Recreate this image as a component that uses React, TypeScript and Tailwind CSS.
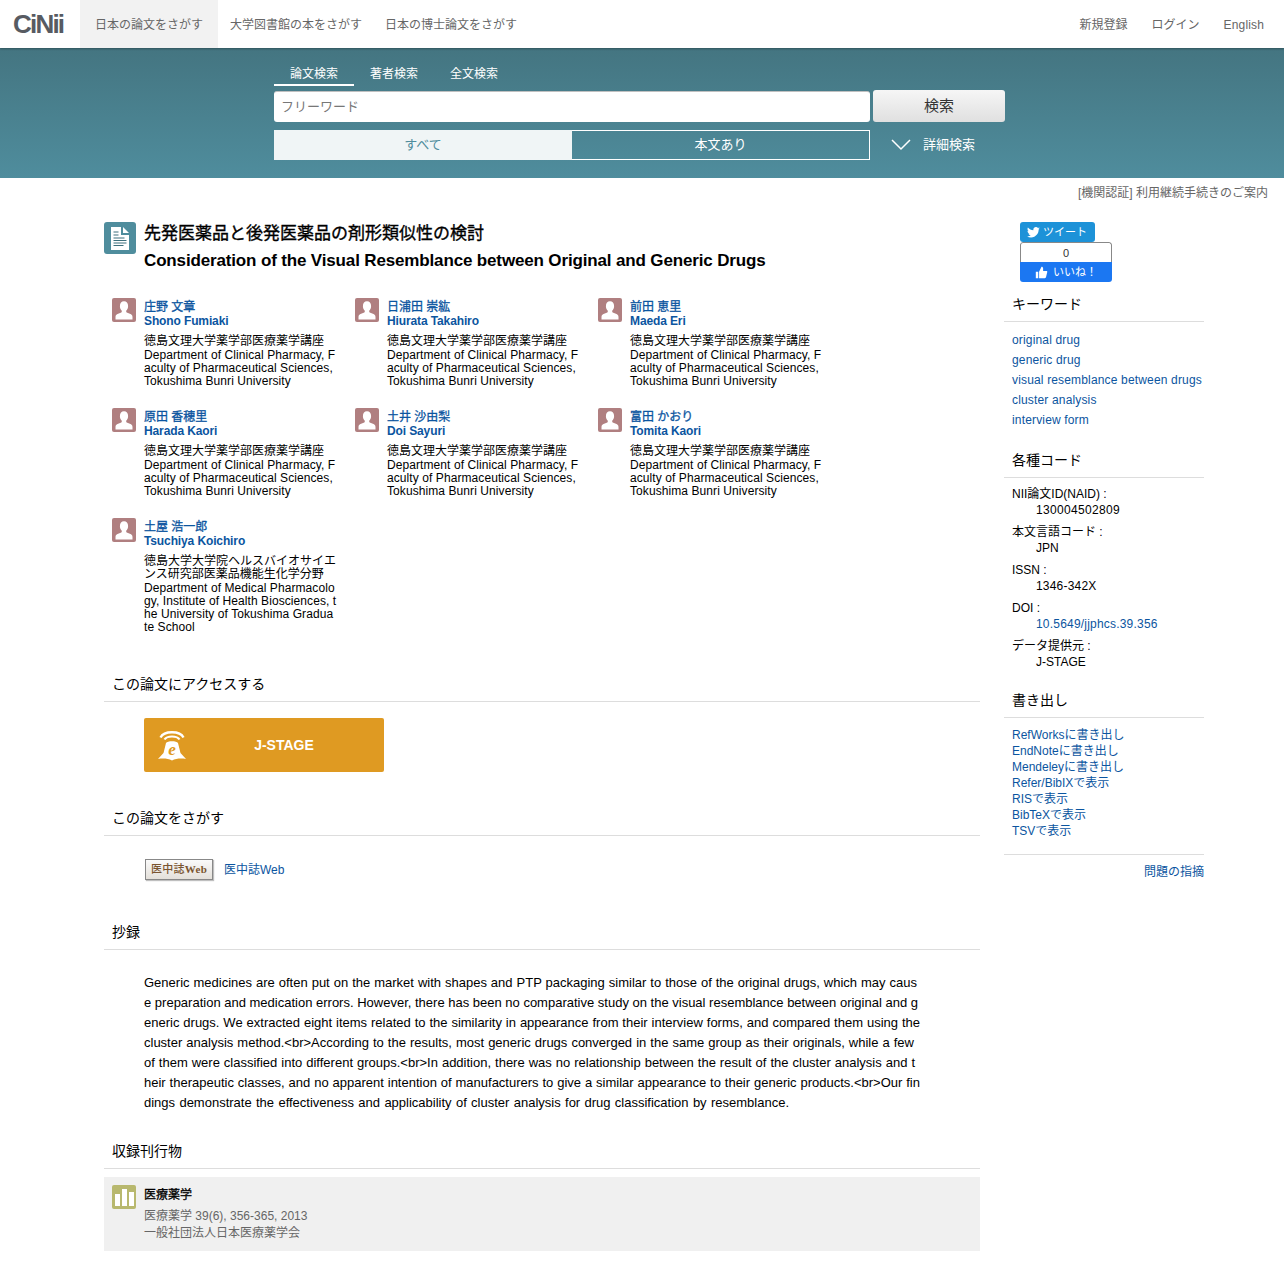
import React from "react";

const font = { fontFamily: '"Liberation Sans", "Noto Sans CJK JP", sans-serif' };

const Person = () => (
  <svg width="24" height="24" viewBox="0 0 24 24" className="block rounded-[2px] bg-[#b07f80] shrink-0">
    <path d="M3.5 21.5v-2.6c0-1.6 1-2.5 2.6-3.1l3.2-1.3c.4-.2.5-.5.5-.9v-.9c-1.2-1-1.9-2.600-1.900-4.700C7.900 5 9.500 3.200 12 3.200s4.100 1.800 4.100 4.800c0 2.100-.7 3.700-1.900 4.700v.9c0 .4.100.7.500.9l3.200 1.300c1.600.6 2.600 1.500 2.600 3.100v2.600z" fill="#fff" />
  </svg>
);

const stdAff = "徳島文理大学薬学部医療薬学講座";
const stdEn = ["Department of Clinical Pharmacy, F", "aculty of Pharmaceutical Sciences,", "Tokushima Bunri University"];
const authors = [
  { ja: "庄野 文章", en: "Shono Fumiaki", aff: stdAff, enAff: stdEn },
  { ja: "日浦田 崇紘", en: "Hiurata Takahiro", aff: stdAff, enAff: stdEn },
  { ja: "前田 恵里", en: "Maeda Eri", aff: stdAff, enAff: stdEn },
  { ja: "原田 香穂里", en: "Harada Kaori", aff: stdAff, enAff: stdEn },
  { ja: "土井 沙由梨", en: "Doi Sayuri", aff: stdAff, enAff: stdEn },
  { ja: "富田 かおり", en: "Tomita Kaori", aff: stdAff, enAff: stdEn },
  {
    ja: "土屋 浩一郎",
    en: "Tsuchiya Koichiro",
    aff: "徳島大学大学院ヘルスバイオサイエンス研究部医薬品機能生化学分野",
    enAff: ["Department of Medical Pharmacolo", "gy, Institute of Health Biosciences, t", "he University of Tokushima Gradua", "te School"],
  },
];

const Heading = ({ children, className = "" }: { children: React.ReactNode; className?: string }) => (
  <h2 className={`pl-2 pb-[7px] border-b border-[#dddddd] text-[14px] leading-[20px] font-normal text-black ${className}`}>{children}</h2>
);

const codes: [string, string, string][] = [
  ["NII論文ID(NAID) :", "130004502809", "tracking-[0.33px]"],
  ["本文言語コード :", "JPN", ""],
  ["ISSN :", "1346-342X", "tracking-[0.2px]"],
  ["DOI :", "10.5649/jjphcs.39.356", "tracking-[0.2px] text-[#0b55a0]"],
  ["データ提供元 :", "J-STAGE", ""],
];

const abstractLines: [string, string][] = [
  ["Generic medicines are often put on the market with shapes and PTP packaging similar to those of the original drugs, which may caus", "w-[773px]"],
  ["e preparation and medication errors. However, there has been no comparative study on the visual resemblance between original and g", "w-[773px]"],
  ["eneric drugs. We extracted eight items related to the similarity in appearance from their interview forms, and compared them using the", "w-[776px]"],
  ["cluster analysis method.<br>According to the results, most generic drugs converged in the same group as their originals, while a few", "w-[770px]"],
  ["of them were classified into different groups.<br>In addition, there was no relationship between the result of the cluster analysis and t", "w-[771px]"],
  ["heir therapeutic classes, and no apparent intention of manufacturers to give a similar appearance to their generic products.<br>Our fin", "w-[776px]"],
  ["dings demonstrate the effectiveness and applicability of cluster analysis for drug classification by resemblance.", "w-[645px]"],
];

export default function App() {
  return (
    <div style={font} className="w-[1284px] h-[1283px] bg-white text-[12px] text-black overflow-hidden">
      <header className="relative z-10 h-[48px] bg-white flex items-stretch justify-between shadow-[0_1px_2px_rgba(0,0,0,0.3)]">
        <div className="flex items-stretch">
          <div className="w-[80px] pl-[13px] flex items-center">
            <span className="text-[26px] leading-none font-bold tracking-[-1.8px] text-[#575b62]">CiNii</span>
          </div>
          <div className="w-[138px] bg-[#f2f2f2] pl-[15px] pt-[1px] flex items-center text-[#666]">日本の論文をさがす</div>
          <div className="pl-[12px] pt-[1px] flex items-center text-[#666]">大学図書館の本をさがす</div>
          <div className="pl-[25px] pt-[1px] -ml-[2px] flex items-center text-[#666]">日本の博士論文をさがす</div>
        </div>
        <div className="flex items-center gap-[24px] pr-[20px] pt-[1px] text-[#666]">
          <span>新規登録</span>
          <span>ログイン</span>
          <span className="tracking-[0.15px]">English</span>
        </div>
      </header>

      <section className="h-[130px] bg-gradient-to-b from-[#447581] to-[#4f8d9d] pl-[274px] pt-[12px] text-white">
        <div className="flex h-[26px]">
          <div className="w-[80px] border-b-2 border-white text-center leading-[28px]">論文検索</div>
          <div className="w-[80px] text-center leading-[28px]">著者検索</div>
          <div className="w-[80px] text-center leading-[28px]">全文検索</div>
        </div>
        <div className="flex mt-[4px] h-[32px]">
          <div className="w-[596px] mt-[1px] h-[31px] bg-white rounded-[3px] border-t border-[#c0c0c0] pl-[7px] flex items-center text-[13px] text-[#777]">フリーワード</div>
          <div className="ml-[3px] w-[132px] rounded-[3px] bg-gradient-to-b from-[#f6f6f6] to-[#e0e0e0] flex items-center justify-center text-[15px] text-[#333]">検索</div>
        </div>
        <div className="flex mt-[8px] h-[30px] items-stretch">
          <div className="w-[298px] bg-[#f0f5f6] text-[#4f8d9d] text-[13px] flex items-center justify-center">すべて</div>
          <div className="w-[298px] border border-white border-l-0 text-[13px] flex items-center justify-center">本文あり</div>
          <div className="flex items-center ml-[21px]">
            <svg width="20" height="12" viewBox="0 0 20 12" fill="none" stroke="#ffffff" strokeWidth="1.500">
              <path d="M1 1l9 9 9-9" />
            </svg>
            <span className="ml-[12px] text-[13px]">詳細検索</span>
          </div>
        </div>
      </section>

      <div className="h-[28px] pr-[16px] pt-[1px] text-right text-[#666] leading-[28px]">[機関認証] 利用継続手続きのご案内</div>

      <div className="flex pl-[104px] pt-[16px]">
        <main className="w-[876px]">
          <div className="flex">
            <div className="w-[32px] h-[32px] rounded-[3px] bg-[#4f8d9d] flex items-center justify-center shrink-0">
              <svg width="18" height="23" viewBox="0 0 18 23">
                <path d="M0 0h10v8h8v15H0z" fill="#fff" />
                <path d="M12 0l6 6h-6z" fill="#fff" />
                <path d="M2.500 5h5M2.500 8h5M2.500 11h11M2.500 13.500h13M2.500 16h13M2.500 18.500h10" stroke="#3d6f7c" strokeWidth="1" />
              </svg>
            </div>
            <div className="ml-[8px]">
              <h1 className="text-[17px] leading-[24px] font-normal [-webkit-text-stroke:0.35px_#000]">先発医薬品と後発医薬品の剤形類似性の検討</h1>
              <p className="text-[17px] leading-[27px] mt-[1px] font-bold tracking-[-0.15px]">Consideration of the Visual Resemblance between Original and Generic Drugs</p>
            </div>
          </div>

          <div className="grid grid-cols-[243px_243px_243px] mt-[24px] pl-[8px]">
            {authors.map((a) => (
              <div key={a.ja} className="flex h-[110px] last:h-auto">
                <Person />
                <div className="ml-[8px] mt-[1px] w-[192px]">
                  <div className="h-[15px] font-normal [-webkit-text-stroke:0.3px_#0b55a0] text-[#0b55a0] leading-[17px]">{a.ja}</div>
                  <div className="font-bold text-[#0b55a0] leading-[15px] tracking-[-0.12px]">{a.en}</div>
                  <div className="mt-[6px] leading-[13px] break-all">
                    <div className="mb-[1px]">{a.aff}</div>
                    {a.enAff.map((l) => (
                      <div key={l} className="w-[192px] whitespace-nowrap tracking-[0.08px]">{l}</div>
                    ))}
                  </div>
                </div>
              </div>
            ))}
          </div>

          <Heading className="mt-[40px]">この論文にアクセスする</Heading>
          <div className="pl-[40px] pt-[16px]">
            <div className="relative w-[240px] h-[54px] rounded-[2px] bg-[#df9a22] pl-[40px] flex items-center justify-center text-white font-bold text-[14px]">
              <svg className="absolute left-[13px] top-[11px]" width="30" height="32" viewBox="0 0 30 32" fill="none">
                <path d="M3.500 8.500C7 1.500 23 1.500 26.500 8.500" stroke="#fff" strokeWidth="2.400" />
                <path d="M7.500 10.500C10 6.500 20 6.500 22.500 10.500" stroke="#fff" strokeWidth="2.200" />
                <path d="M9 14c1.500-2.500 10.500-2.500 12 0l2.500 10 5.500 6c-5 -.8-10-.5-14 1.500-4-2-9-2.300-14-1.500l5.500-6z" fill="#fff" />
                <text x="15" y="26" textAnchor="middle" fontSize="17" fontStyle="italic" fontWeight="700" fill="#df9a22" fontFamily="Liberation Serif, serif">e</text>
              </svg>
              <span>J-STAGE</span>
            </div>
          </div>

          <Heading className="mt-[36px]">この論文をさがす</Heading>
          <div className="pl-[41px] flex items-center h-[66px]">
            <div className="w-[68px] h-[21px] border border-[#888] bg-gradient-to-b from-[#fafafa] to-[#e4e0da] flex items-center justify-center text-[11px] font-medium tracking-[0.3px] text-[#7a5530] shadow-[1px_1px_1px_rgba(0,0,0,0.25)]">
              医中誌<span style={{ fontFamily: '"Liberation Serif", serif' }} className="font-bold">Web</span>
            </div>
            <a className="ml-[11px] mt-[1px] text-[#0b55a0]">医中誌Web</a>
          </div>

          <Heading className="mt-[20px]">抄録</Heading>
          <div className="ml-[40px] mt-[23px] text-[13px] leading-[20px] text-black">
            {abstractLines.map(([l, w]) => (
              <p key={l} className={`${w} whitespace-nowrap text-justify [text-align-last:justify]`}>{l}</p>
            ))}
          </div>

          <Heading className="mt-[28px]">収録刊行物</Heading>
          <div className="mt-[8px] h-[74px] bg-[#f0f0f0] flex pl-[8px] pt-[8px]">
            <div className="w-[24px] h-[24px] rounded-[2px] bg-[#b8b86e] flex items-end justify-center gap-[2px] pb-[3px]">
              <div className="w-[5px] h-[12px] bg-white" />
              <div className="w-[5px] h-[17px] bg-white" />
              <div className="w-[5px] h-[14px] bg-white" />
            </div>
            <div className="ml-[8px]">
              <div className="font-normal [-webkit-text-stroke:0.3px_#000] leading-[20px]">医療薬学</div>
              <div className="text-[#666] leading-[17px] mt-[3px]">医療薬学 39(6), 356-365, 2013</div>
              <div className="text-[#666] leading-[17px]">一般社団法人日本医療薬学会</div>
            </div>
          </div>
        </main>

        <aside className="ml-[24px] w-[200px]">
          <div className="pl-[16px]">
            <div className="w-[75px] h-[20px] rounded-[3px] bg-[#1d92d8] flex items-center pl-[7px] text-white text-[11px]">
              <svg width="13" height="11" viewBox="0 0 24 20" fill="#fff" className="mr-[3px]">
                <path d="M23.950 2.400c-.9.400-1.800.7-2.800.8 1-.6 1.800-1.500 2.200-2.700-1 .6-2 1-3.100 1.200C19.300.6 18 0 16.600 0c-2.700 0-4.900 2.200-4.900 4.900 0 .4 0 .8.100 1.100C7.700 5.800 4.100 3.800 1.700.9c-.4.700-.7 1.500-.7 2.500 0 1.700.9 3.200 2.200 4.100-.8 0-1.600-.2-2.200-.6v.1c0 2.400 1.700 4.400 3.900 4.800-.4.100-.8.200-1.300.2-.3 0-.6 0-.9-.1.6 2 2.400 3.400 4.600 3.400-1.700 1.300-3.800 2.100-6.100 2.100-.4 0-.8 0-1.200-.1C2.200 18.200 4.800 19 7.500 19c9.100 0 14-7.500 14-14v-.6c1-.7 1.800-1.600 2.400-2z" />
              </svg>
              ツイート
            </div>
            <div className="w-[92px] h-[40px] rounded-[3px] overflow-hidden">
              <div className="h-[20px] bg-white border border-b-0 border-[#888] rounded-t-[3px] text-center text-[11px] leading-[20px] text-[#333]">0</div>
              <div className="h-[20px] bg-[#1b77f2] flex items-center justify-center text-white text-[11px]">
                <svg width="13" height="13" viewBox="0 0 16 16" fill="#fff" className="mr-[5px]">
                  <path d="M1 7h3v8H1zM5 7l3-6c1.200 0 2 .8 2 2v3h4c.8 0 1.300.7 1.100 1.500l-1.500 6c-.2.700-.7 1.500-1.600 1.500H5z" />
                </svg>
                いいね！
              </div>
            </div>
          </div>

          <Heading className="mt-[12px]">キーワード</Heading>
          <ul className="pl-2 pt-[8px] text-[#0b55a0] tracking-[0.16px]">
            {["original drug", "generic drug", "visual resemblance between drugs", "cluster analysis", "interview form"].map((k) => (
              <li key={k} className="leading-[20px] whitespace-nowrap">{k}</li>
            ))}
          </ul>

          <Heading className="mt-[20px]">各種コード</Heading>
          <dl className="pl-2 pt-[8px]">
            {codes.map(([k, v, cls]) => (
              <div key={k} className="mb-[6px]">
                <dt className="leading-[16px]">{k}</dt>
                <dd className={`pl-[24px] leading-[16px] ${cls}`}>{v}</dd>
              </div>
            ))}
          </dl>

          <Heading className="mt-[20px]">書き出し</Heading>
          <ul className="pl-2 pt-[9px] pb-[15px] text-[#0b55a0] border-b border-[#dddddd]">
            {["RefWorksに書き出し", "EndNoteに書き出し", "Mendeleyに書き出し", "Refer/BibIXで表示", "RISで表示", "BibTeXで表示", "TSVで表示"].map((k) => (
              <li key={k} className="leading-[16px]">{k}</li>
            ))}
          </ul>
          <div className="text-right text-[#0b55a0] mt-[9px] leading-[16px]">問題の指摘</div>
        </aside>
      </div>
    </div>
  );
}
